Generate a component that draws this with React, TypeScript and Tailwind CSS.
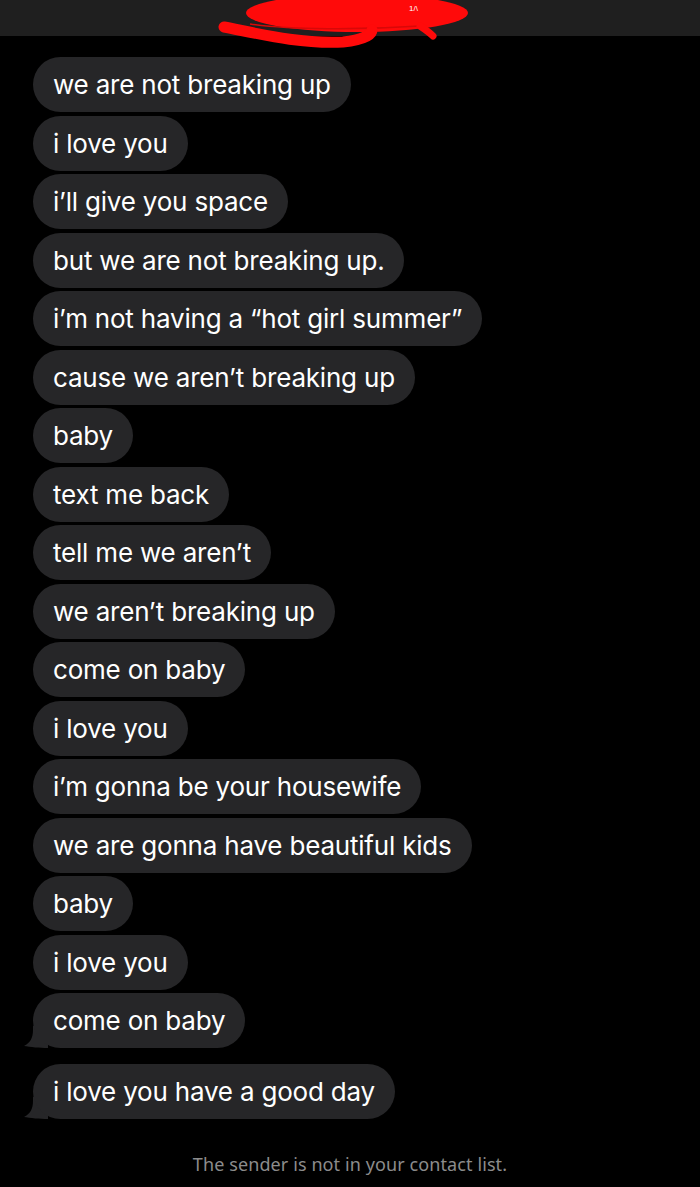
const messages = [
  "we are not breaking up",
  "i love you",
  "i\u2019ll give you space",
  "but we are not breaking up.",
  "i\u2019m not having a \u201chot girl summer\u201d",
  "cause we aren\u2019t breaking up",
  "baby",
  "text me back",
  "tell me we aren\u2019t",
  "we aren\u2019t breaking up",
  "come on baby",
  "i love you",
  "i\u2019m gonna be your housewife",
  "we are gonna have beautiful kids",
  "baby",
  "i love you",
  "come on baby",
];

function Tail() {
  return (
    <svg className="absolute -left-[9px] bottom-0" width="24" height="22" viewBox="0 0 24 22">
      <path d="M24 0 L24 22 C16 22 6 21 0 20 C6 17 9 12 9 4 L9 0 Z" fill="#262628" />
    </svg>
  );
}

function Bubble({ text, tail }: { text: string; tail?: boolean }) {
  return (
    <div className="relative self-start">
      {tail && <Tail />}
      <div className="relative h-[55px] flex items-center rounded-full bg-[#262628] px-[20px] text-[26px] text-white tracking-[-0.2px] whitespace-nowrap">
        {text}
      </div>
    </div>
  );
}

// red marker scribble over the contact name
function Scribble() {
  return (
    <svg className="absolute left-0 top-0" width="700" height="60" viewBox="0 0 700 60">
      <ellipse cx="357" cy="13" rx="111" ry="19" fill="#ff0a0a" />
      <path d="M250 24 C290 30 360 30 420 26" stroke="#d80808" strokeWidth="1.5" fill="none" />
      <path
        d="M224 27 C260 34 300 44 343 42 C362 40 372 35 372 30"
        stroke="#ff0a0a" strokeWidth="11" fill="none" strokeLinecap="round"
      />
      <path d="M420 26 C426 30 430 33 433 36" stroke="#ff0a0a" strokeWidth="7" fill="none" strokeLinecap="round" />
      <text x="409" y="11" fill="#ffffff" fontSize="8" fontFamily="Liberation Sans, sans-serif">1/\</text>
    </svg>
  );
}

export default function App() {
  return (
    <div className="relative w-[700px] h-[1187px] bg-black overflow-hidden" style={{ fontFamily: "Inter, 'Liberation Sans', sans-serif" }}>
      <div className="h-[36px] bg-[#1f1f1f]" />
      <Scribble />
      <div className="flex flex-col gap-[3.5px] pl-[33px] pt-[21px]">
        {messages.map((m, i) => (
          <Bubble key={i} text={m} tail={i === messages.length - 1} />
        ))}
        <div className="self-start mt-[12px]">
          <Bubble text="i love you have a good day" tail />
        </div>
      </div>
      <p className="mt-[32px] text-center text-[18px] text-[#8c8c8c] tracking-[0.1px]" style={{ fontFamily: "'Noto Sans', sans-serif" }}>
        The sender is not in your contact list.
      </p>
    </div>
  );
}
